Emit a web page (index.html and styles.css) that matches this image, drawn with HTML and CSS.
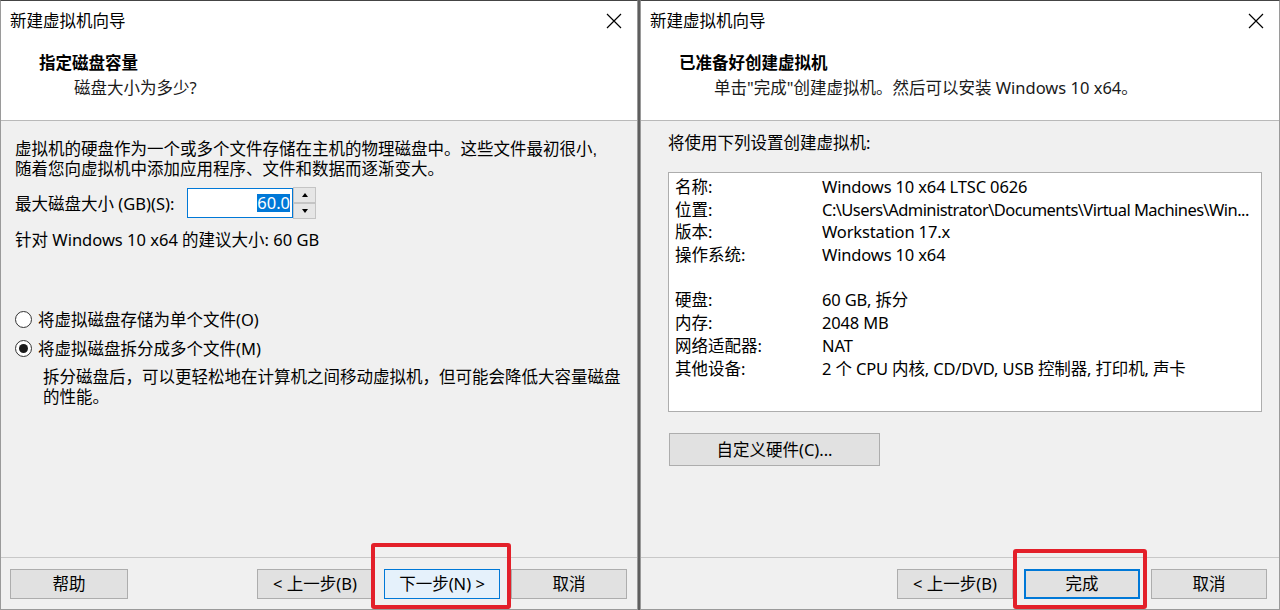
FILE: index.html
```html
<!DOCTYPE html>
<html lang="zh-CN">
<head>
<meta charset="utf-8">
<title>新建虚拟机向导</title>
<link rel="stylesheet" href="styles.css">
</head>
<body>
<div class="screen">

  <!-- left wizard page: disk size -->
  <div class="dialog dlg-left">
    <div class="titlebar">
      <span class="caption">新建虚拟机向导</span>
      <svg class="close" width="16" height="16" viewBox="0 0 16 16"><path d="M1 1 L15 15 M15 1 L1 15" stroke="#000" stroke-width="1.2" fill="none"/></svg>
    </div>
    <div class="header">
      <div class="h-title">指定磁盘容量</div>
      <div class="h-sub">磁盘大小为多少?</div>
    </div>
    <div class="body body-left">
      <div class="text tight">
        <span class="line">虚拟机的硬盘作为一个或多个文件存储在主机的物理磁盘中。这些文件最初很小,</span>
        <span class="line">随着您向虚拟机中添加应用程序、文件和数据而逐渐变大。</span>
      </div>
      <div class="size-row">
        <span class="size-label">最大磁盘大小 (GB)(S):</span>
        <div class="spin-input"><span class="sel">60.0</span></div>
        <div class="spin-btns">
          <div class="spin-btn"><span class="tri-up"></span></div>
          <div class="spin-btn"><span class="tri-down"></span></div>
        </div>
      </div>
      <p class="text recommend">针对 Windows 10 x64 的建议大小: 60 GB</p>
      <div class="radio-row first">
        <span class="radio"></span>
        <span>将虚拟磁盘存储为单个文件(O)</span>
      </div>
      <div class="radio-row">
        <span class="radio checked"></span>
        <span>将虚拟磁盘拆分成多个文件(M)</span>
      </div>
      <div class="text tight radio-desc">
        <span class="line">拆分磁盘后，可以更轻松地在计算机之间移动虚拟机，但可能会降低大容量磁盘</span>
        <span class="line">的性能。</span>
      </div>
    </div>
    <div class="footer">
      <button class="btn btn-help">帮助</button>
      <span class="spacer"></span>
      <button class="btn">&lt; 上一步(B)</button>
      <button class="btn btn-hover">下一步(N) &gt;</button>
      <button class="btn">取消</button>
    </div>
    <div class="mark mark-left"></div>
  </div>

  <!-- right wizard page: summary -->
  <div class="dialog dlg-right">
    <div class="titlebar">
      <span class="caption">新建虚拟机向导</span>
      <svg class="close" width="16" height="16" viewBox="0 0 16 16"><path d="M1 1 L15 15 M15 1 L1 15" stroke="#000" stroke-width="1.2" fill="none"/></svg>
    </div>
    <div class="header">
      <div class="h-title">已准备好创建虚拟机</div>
      <div class="h-sub">单击"完成"创建虚拟机。然后可以安装 Windows 10 x64。</div>
    </div>
    <div class="body body-right">
      <p class="text">将使用下列设置创建虚拟机:</p>
      <div class="summary">
        <div class="srow"><span class="skey">名称:</span><span class="sval">Windows 10 x64 LTSC 0626</span></div>
        <div class="srow"><span class="skey">位置:</span><span class="sval path">C:\Users\Administrator\Documents\Virtual Machines\Win...</span></div>
        <div class="srow"><span class="skey">版本:</span><span class="sval">Workstation 17.x</span></div>
        <div class="srow"><span class="skey">操作系统:</span><span class="sval">Windows 10 x64</span></div>
        <div class="srow"></div>
        <div class="srow"><span class="skey">硬盘:</span><span class="sval">60 GB, 拆分</span></div>
        <div class="srow"><span class="skey">内存:</span><span class="sval">2048 MB</span></div>
        <div class="srow"><span class="skey">网络适配器:</span><span class="sval">NAT</span></div>
        <div class="srow"><span class="skey">其他设备:</span><span class="sval">2 个 CPU 内核, CD/DVD, USB 控制器, 打印机, 声卡</span></div>
      </div>
      <button class="btn btn-wide">自定义硬件(C)...</button>
    </div>
    <div class="footer">
      <span class="spacer"></span>
      <button class="btn">&lt; 上一步(B)</button>
      <button class="btn btn-focus">完成</button>
      <button class="btn">取消</button>
    </div>
    <div class="mark mark-right"></div>
  </div>

</div>
</body>
</html>
```

FILE: styles.css
```css
html, body {
	margin		: 0;
	padding		: 0;
}
body {
	background	: #5e5e5e;
	font-family	: "Noto Sans", "Noto Sans CJK SC", sans-serif;
	font-size	: 16.5px;
	color		: #000;
}
.screen {
	display		: flex;
	gap		: 2px;
	width		: 1280px;
	height		: 610px;
	overflow	: hidden;
}
.dialog {
	position	: relative;
	display		: flex;
	flex-direction	: column;
	height		: 610px;
	box-sizing	: border-box;
	background	: #f0f0f0;
	border		: 1px solid #9a9a9a;
	border-top-color: #444;
}
.dlg-left	{ width: 638px; }
.dlg-right	{ width: 640px; }

/* title bar + white header */
.titlebar {
	height		: 39px;
	background	: #fff;
	display		: flex;
	align-items	: center;
	padding		: 0 15px 0 9px;
}
.caption {
	flex		: 1;
	line-height	: 24px;
	padding-top	: 1px;
}
.close { display: block; }
.header {
	height		: 81px;
	background	: #fff;
	border-bottom	: 1px solid #b9b9b9;
	padding-left	: 38px;
	box-sizing	: border-box;
	padding-top	: 10px;
}
.h-title {
	font-family	: "Noto Sans CJK SC", sans-serif;
	font-weight	: 700;
	font-size	: 16.5px;
	line-height	: 24px;
}
.h-sub {
	line-height	: 24px;
	margin-top	: 2px;
	padding-left	: 35px;
	color		: #1a1a1a;
}

/* body */
.body {
	flex		: 1;
	display		: flex;
	flex-direction	: column;
	align-items	: flex-start;
}
.text {
	margin		: 0;
	line-height	: 20px;
}
/* CJK-only paragraphs with 20px pitch */
.tight {
	font-family	: "Liberation Sans", "Noto Sans CJK SC", sans-serif;
}
.line {
	display		: block;
	height		: 20px;
	white-space	: nowrap;
}
.body-left {
	padding		: 18px 0 0 14px;
}
.size-row {
	display		: flex;
	align-items	: center;
	margin-top	: 8px;
	height		: 32px;
}
.size-label { width: 172px; }
.spin-input {
	width		: 106px;
	height		: 30px;
	box-sizing	: border-box;
	border		: 1px solid #0078d7;
	background	: #fff;
	display		: flex;
	align-items	: center;
	justify-content	: flex-end;
	padding-right	: 2px;
}
.sel {
	background	: #0078d7;
	color		: #fff;
	line-height	: 18px;
}
.spin-btns {
	display		: flex;
	flex-direction	: column;
	height		: 32px;
}
.spin-btn {
	width		: 23px;
	height		: 16px;
	box-sizing	: border-box;
	border		: 1px solid #c4c4c4;
	background	: #e6e6e6;
	display		: flex;
	align-items	: center;
	justify-content	: center;
}
.tri-up, .tri-down {
	width		: 0;
	height		: 0;
	border-left	: 3px solid transparent;
	border-right	: 3px solid transparent;
}
.tri-up		{ border-bottom: 4px solid #000; }
.tri-down	{ border-top: 4px solid #000; }
.recommend { margin-top: 11px; }
.radio-row {
	display		: flex;
	align-items	: center;
	height		: 24px;
	margin-top	: 5px;
	gap		: 6px;
}
.radio-row.first { margin-top: 57px; }
.radio {
	width		: 17px;
	height		: 17px;
	box-sizing	: border-box;
	border		: 1px solid #333;
	border-radius	: 50%;
	background	: #fff;
	display		: flex;
	align-items	: center;
	justify-content	: center;
}
.radio.checked::after {
	content		: "";
	width		: 9px;
	height		: 9px;
	border-radius	: 50%;
	background	: #1a1a1a;
}
.radio-desc {
	margin-top	: 7px;
	padding-left	: 28px;
}

.body-right {
	padding		: 12px 17px 0 27px;
}
.summary {
	align-self	: stretch;
	margin-top	: 19px;
	height		: 240px;
	box-sizing	: border-box;
	background	: #fff;
	border		: 1px solid #adadad;
	padding		: 3px 4px 0 6px;
}
.srow {
	display		: flex;
	height		: 22.7px;
	line-height	: 22.7px;
	white-space	: nowrap;
}
.skey { width: 147px; flex: none; }
.sval {
	letter-spacing	: -0.15px;
}
.sval.path {
	letter-spacing	: -0.55px;
}

/* buttons */
.btn {
	font		: inherit;
	color		: #000;
	width		: 116px;
	height		: 30px;
	padding		: 0;
	box-sizing	: border-box;
	background	: #e1e1e1;
	border		: 1px solid #adadad;
	line-height	: 26px;
}
.btn-help { width: 118px; }
.btn-hover {
	background	: #e5f1fb;
	border-color	: #0078d7;
}
.btn-focus {
	border		: 2px solid #0078d7;
}
.btn-wide {
	width		: 211px;
	height		: 33px;
	margin-top	: 21px;
	margin-left	: 1px;
}
.footer {
	height		: 52px;
	box-sizing	: border-box;
	border-top	: 1px solid #c8c8c8;
	display		: flex;
	align-items	: flex-start;
	gap		: 11px;
	padding		: 11px 10px 0 9px;
}
.dlg-right .footer { padding-right: 12px; }
.spacer { flex: 1; }

/* red highlight boxes drawn over the screenshot */
.mark {
	position	: absolute;
	border		: 4px solid #e3202a;
	border-radius	: 3px;
	box-sizing	: border-box;
}
.mark-left {
	left		: 370px;
	top		: 542px;
	width		: 140px;
	height		: 66px;
}
.mark-right {
	left		: 372px;
	top		: 548px;
	width		: 134px;
	height		: 60px;
}
```
